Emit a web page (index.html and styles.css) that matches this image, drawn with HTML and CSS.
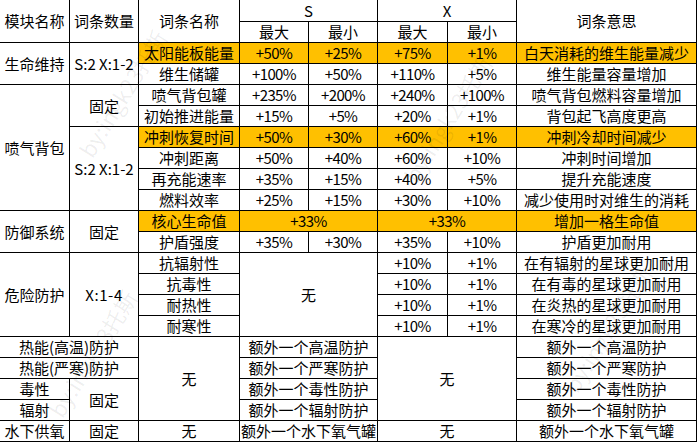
FILE: index.html
```html
<!DOCTYPE html>
<html lang="zh-CN">
<head>
<meta charset="utf-8">
<title>模块词条</title>
<link rel="stylesheet" href="styles.css">
</head>
<body>
<div class="sheet">
<table class="grid">
  <colgroup>
    <col class="c1"><col class="c2"><col class="c3"><col class="c4"><col class="c5"><col class="c6"><col class="c7"><col class="c8">
  </colgroup>
  <tr class="h1">
    <td rowspan="2">模块名称</td>
    <td rowspan="2">词条数量</td>
    <td rowspan="2">词条名称</td>
    <td colspan="2">S</td>
    <td colspan="2">X</td>
    <td rowspan="2">词条意思</td>
  </tr>
  <tr>
    <td>最大</td><td>最小</td><td>最大</td><td>最小</td>
  </tr>
  <tr>
    <td rowspan="2">生命维持</td>
    <td rowspan="2" class="lat">S:2 X:1-2</td>
    <td class="hl">太阳能板能量</td>
    <td class="hl num">+50%</td><td class="hl num">+25%</td><td class="hl num">+75%</td><td class="hl num">+1%</td>
    <td class="hl">白天消耗的维生能量减少</td>
  </tr>
  <tr>
    <td>维生储罐</td>
    <td class="num">+100%</td><td class="num">+50%</td><td class="num">+110%</td><td class="num">+5%</td>
    <td>维生能量容量增加</td>
  </tr>
  <tr>
    <td rowspan="6">喷气背包</td>
    <td rowspan="2">固定</td>
    <td>喷气背包罐</td>
    <td class="num">+235%</td><td class="num">+200%</td><td class="num">+240%</td><td class="num">+100%</td>
    <td>喷气背包燃料容量增加</td>
  </tr>
  <tr>
    <td>初始推进能量</td>
    <td class="num">+15%</td><td class="num">+5%</td><td class="num">+20%</td><td class="num">+1%</td>
    <td>背包起飞高度更高</td>
  </tr>
  <tr>
    <td rowspan="4" class="lat">S:2 X:1-2</td>
    <td class="hl">冲刺恢复时间</td>
    <td class="hl num">+50%</td><td class="hl num">+30%</td><td class="hl num">+60%</td><td class="hl num">+1%</td>
    <td class="hl">冲刺冷却时间减少</td>
  </tr>
  <tr>
    <td>冲刺距离</td>
    <td class="num">+50%</td><td class="num">+40%</td><td class="num">+60%</td><td class="num">+10%</td>
    <td>冲刺时间增加</td>
  </tr>
  <tr>
    <td>再充能速率</td>
    <td class="num">+35%</td><td class="num">+15%</td><td class="num">+40%</td><td class="num">+5%</td>
    <td>提升充能速度</td>
  </tr>
  <tr>
    <td>燃料效率</td>
    <td class="num">+25%</td><td class="num">+15%</td><td class="num">+30%</td><td class="num">+10%</td>
    <td>减少使用时对维生的消耗</td>
  </tr>
  <tr>
    <td rowspan="2">防御系统</td>
    <td rowspan="2">固定</td>
    <td class="hl">核心生命值</td>
    <td colspan="2" class="hl num">+33%</td>
    <td colspan="2" class="hl num">+33%</td>
    <td class="hl">增加一格生命值</td>
  </tr>
  <tr>
    <td>护盾强度</td>
    <td class="num">+35%</td><td class="num">+30%</td><td class="num">+35%</td><td class="num">+10%</td>
    <td>护盾更加耐用</td>
  </tr>
  <tr>
    <td rowspan="4">危险防护</td>
    <td rowspan="4" class="lat wide">X:1-4</td>
    <td>抗辐射性</td>
    <td colspan="2" rowspan="4">无</td>
    <td class="num">+10%</td><td class="num">+1%</td>
    <td>在有辐射的星球更加耐用</td>
  </tr>
  <tr>
    <td>抗毒性</td>
    <td class="num">+10%</td><td class="num">+1%</td>
    <td>在有毒的星球更加耐用</td>
  </tr>
  <tr>
    <td>耐热性</td>
    <td class="num">+10%</td><td class="num">+1%</td>
    <td>在炎热的星球更加耐用</td>
  </tr>
  <tr>
    <td>耐寒性</td>
    <td class="num">+10%</td><td class="num">+1%</td>
    <td>在寒冷的星球更加耐用</td>
  </tr>
  <tr>
    <td colspan="2">热能(高温)防护</td>
    <td rowspan="4">无</td>
    <td colspan="2">额外一个高温防护</td>
    <td colspan="2" rowspan="4">无</td>
    <td>额外一个高温防护</td>
  </tr>
  <tr>
    <td colspan="2">热能(严寒)防护</td>
    <td colspan="2">额外一个严寒防护</td>
    <td>额外一个严寒防护</td>
  </tr>
  <tr>
    <td>毒性</td>
    <td rowspan="2">固定</td>
    <td colspan="2">额外一个毒性防护</td>
    <td>额外一个毒性防护</td>
  </tr>
  <tr>
    <td>辐射</td>
    <td colspan="2">额外一个辐射防护</td>
    <td>额外一个辐射防护</td>
  </tr>
  <tr>
    <td>水下供氧</td>
    <td>固定</td>
    <td>无</td>
    <td colspan="2">额外一个水下氧气罐</td>
    <td colspan="2">无</td>
    <td>额外一个水下氧气罐</td>
  </tr>
</table>
<span class="wm wm1">by:ingk23托斯</span>
<span class="wm wm2">by:ingk23托斯</span>
<span class="wm wm3">by:ingk23托斯</span>
<span class="wm wm4">by:ingk23托斯</span>
</div>
</body>
</html>
```

FILE: styles.css
```css
html, body {
  margin: 0;
  padding: 0;
  background: #ffffff;
}

.sheet {
  position: relative;
  width: 698px;
  height: 443px;
  overflow: hidden;
}

.grid {
  table-layout: fixed;
  border-collapse: separate;
  border-spacing: 0;
  width: 697px;
  font-family: "Noto Sans CJK SC", "Microsoft YaHei", sans-serif;
  font-size: 15px;
  color: #000000;
}

.c1 { width: 70px; }
.c2 { width: 69px; }
.c3 { width: 101px; }
.c4 { width: 69px; }
.c5 { width: 69px; }
.c6 { width: 70px; }
.c7 { width: 69px; }
.c8 { width: 180px; }

.grid tr { height: 21px; }
.grid tr.h1 { height: 22px; }

.grid td {
  box-sizing: border-box;
  padding: 0;
  border-right: 1px solid #000000;
  border-bottom: 1px solid #000000;
  text-align: center;
  vertical-align: middle;
  line-height: 20px;
  white-space: nowrap;
  overflow: visible;
}

.grid td.hl {
  background: #ffc000;
}

.grid td.num {
  letter-spacing: -0.6px;
}

.grid td.lat {
  letter-spacing: 0;
}

.grid td.wide {
  letter-spacing: 0.6px;
}

.wm {
  position: absolute;
  font-family: "Noto Sans CJK SC", sans-serif;
  font-size: 22px;
  line-height: 26px;
  color: rgba(0, 0, 0, 0.07);
  transform: rotate(-58deg);
  transform-origin: left bottom;
  white-space: nowrap;
  pointer-events: none;
}

.wm1 { left: 95px; top: 135px; }
.wm2 { left: 65px; top: 395px; }
.wm3 { left: 420px; top: 160px; }
.wm4 { left: 580px; top: 370px; }
```
